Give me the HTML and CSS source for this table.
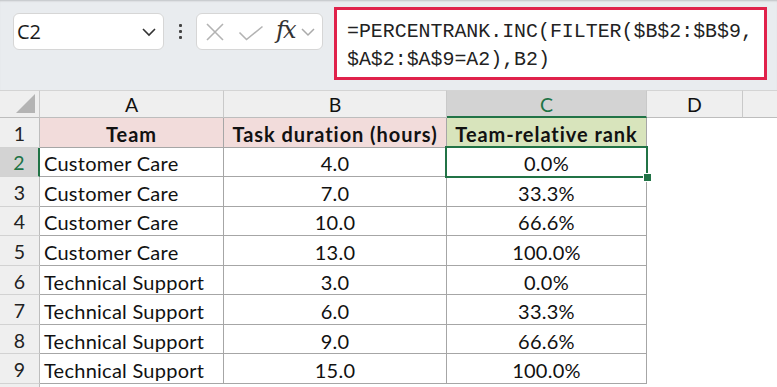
FILE: index.html
```html
<!DOCTYPE html>
<html>
<head>
<meta charset="utf-8">
<link rel="stylesheet" href="styles.css">
</head>
<body>
<div class="toolbar">
  <div class="namebox">
    <span class="nb-text">C2</span>
    <svg class="chev" width="16" height="10" viewBox="0 0 16 10"><path d="M2 2 L8 8 L14 2" fill="none" stroke="#333" stroke-width="1.6"/></svg>
  </div>
  <div class="dots"><i></i><i></i><i></i></div>
  <div class="fbtns">
    <svg class="ic-x" width="20" height="20" viewBox="0 0 20 20"><path d="M2 2 L18 18 M18 2 L2 18" stroke="#b3b3b3" stroke-width="1.6" fill="none"/></svg>
    <svg class="ic-ok" width="26" height="16" viewBox="0 0 26 16"><path d="M1.5 7.5 L8.5 14.5 L24.5 1.5" stroke="#b3b3b3" stroke-width="1.6" fill="none"/></svg>
    <span class="fx">fx</span>
    <svg class="chev2" width="16" height="10" viewBox="0 0 16 10"><path d="M2 2 L8 8 L14 2" fill="none" stroke="#aaa" stroke-width="1.5"/></svg>
  </div>
  <div class="fbar">
    <div class="ftext">=PERCENTRANK.INC(FILTER($B$2:$B$9,<br>$A$2:$A$9=A2),B2)</div>
  </div>
</div>
<div class="sheet">
  <div class="ch corner"><span class="tri"></span></div>
  <div class="ch">A</div>
  <div class="ch">B</div>
  <div class="ch chsel">C</div>
  <div class="ch">D</div>
  <div class="ch last"></div>

  <div class="rh">1</div>
  <div class="c hdr pink">Team</div>
  <div class="c hdr pink">Task duration (hours)</div>
  <div class="c hdr green">Team-relative rank</div>
  <div class="e"></div><div class="e"></div>

  <div class="rh rhsel">2</div>
  <div class="c l">Customer Care</div>
  <div class="c">4.0</div>
  <div class="c sel">0.0%<span class="selbox"><span class="handle"></span></span></div>
  <div class="e"></div><div class="e"></div>

  <div class="rh">3</div>
  <div class="c l">Customer Care</div>
  <div class="c">7.0</div>
  <div class="c">33.3%</div>
  <div class="e"></div><div class="e"></div>

  <div class="rh">4</div>
  <div class="c l">Customer Care</div>
  <div class="c">10.0</div>
  <div class="c">66.6%</div>
  <div class="e"></div><div class="e"></div>

  <div class="rh">5</div>
  <div class="c l">Customer Care</div>
  <div class="c">13.0</div>
  <div class="c">100.0%</div>
  <div class="e"></div><div class="e"></div>

  <div class="rh">6</div>
  <div class="c l">Technical Support</div>
  <div class="c">3.0</div>
  <div class="c">0.0%</div>
  <div class="e"></div><div class="e"></div>

  <div class="rh">7</div>
  <div class="c l">Technical Support</div>
  <div class="c">6.0</div>
  <div class="c">33.3%</div>
  <div class="e"></div><div class="e"></div>

  <div class="rh">8</div>
  <div class="c l">Technical Support</div>
  <div class="c">9.0</div>
  <div class="c">66.6%</div>
  <div class="e"></div><div class="e"></div>

  <div class="rh">9</div>
  <div class="c l">Technical Support</div>
  <div class="c">15.0</div>
  <div class="c">100.0%</div>
  <div class="e"></div><div class="e"></div>

  <div class="rh"></div>
  <div class="e"></div><div class="e"></div><div class="e"></div><div class="e"></div><div class="e"></div>
</div>
</body>
</html>
```
FILE: styles.css
```css
* { box-sizing: border-box; }
html, body { margin: 0; padding: 0; }
body {
  width: 777px;
  height: 387px;
  overflow: hidden;
  background: #fff;
  font-family: Lato, "Liberation Sans", sans-serif;
}
.toolbar {
  height: 90px;
  background: #e9ecef;
  display: flex;
  align-items: flex-start;
  padding-left: 13px;
  box-shadow: inset 0 2px 2px -1px rgba(0,0,0,0.18);
}
.namebox {
  margin-top: 13px;
  width: 151px;
  height: 37px;
  background: #fff;
  border: 1px solid #d6d6d6;
  border-radius: 6px;
  display: flex;
  align-items: center;
  padding: 0 6px 0 3px;
}
.nb-text {
  font-family: "Open Sans", "Liberation Sans", sans-serif;
  font-size: 20px;
  color: #1a1a1a;
  flex: 1;
}
.chev { margin-top: 1px; }
.dots {
  margin: 24px 0 0 0;
  width: 32px;
  display: flex;
  flex-direction: column;
  align-items: center;
  gap: 3px;
}
.dots i {
  display: block;
  width: 3px;
  height: 3px;
  background: #444;
  border-radius: 1px;
}
.fbtns {
  margin-top: 13px;
  width: 127px;
  height: 37px;
  background: #fff;
  border: 1px solid #d6d6d6;
  border-radius: 6px;
  display: flex;
  align-items: center;
  padding-left: 8px;
}
.ic-x { margin-right: 13px; }
.ic-ok { margin-right: 12px; margin-top: 2px; }
.fx {
  font-family: "DejaVu Serif", "Liberation Serif", serif;
  font-style: italic;
  font-size: 24px;
  color: #333;
  letter-spacing: -2px;
  margin-top: -4px;
}
.chev2 { margin-left: 6px; }
.fbar {
  margin-top: 7px;
  margin-left: 11px;
  width: 433px;
  height: 73px;
  background: #fff;
  border: 3px solid #e0224b;
  padding: 8px 0 0 10px;
}
.ftext {
  font-family: "Liberation Mono", monospace;
  font-size: 19.9px;
  line-height: 28px;
  color: #222;
  white-space: nowrap;
}
.sheet {
  display: grid;
  grid-template-columns: 40px 184px 223px 200px 96px 1fr;
  grid-template-rows: 28px repeat(9, 29.56px) 10px;
  font-size: 20px;
  color: #111;
}
.ch {
  background: #efefef;
  border-top: 1px solid #d4d4d4;
  border-right: 1px solid #c9c9c9;
  border-bottom: 1px solid #bdbdbd;
  display: flex;
  align-items: center;
  justify-content: center;
  font-size: 19.5px;
  color: #111;
  padding-top: 1px;
}
.ch.last { border-right: none; }
.ch.chsel {
  background: #d3d3d3;
  color: #217346;
  border-bottom: 2px solid #217346;
}
.corner { position: relative; }
.tri {
  position: absolute;
  right: 4px;
  bottom: 4px;
  width: 0;
  height: 0;
  border-left: 19px solid transparent;
  border-bottom: 19px solid #b4b4b4;
}
.rh {
  background: #efefef;
  border-right: 1px solid #bdbdbd;
  border-bottom: 1px solid #d2d2d2;
  display: flex;
  align-items: center;
  justify-content: center;
  color: #222;
  font-size: 19.5px;
  padding-top: 2px;
}
.rh.rhsel {
  background: #d3d3d3;
  color: #217346;
  border-right: 2px solid #217346;
}
.c {
  border-right: 1px solid #a6a6a6;
  border-bottom: 1px solid #a6a6a6;
  display: flex;
  align-items: center;
  justify-content: center;
  white-space: nowrap;
  position: relative;
  padding-top: 3px;
  letter-spacing: 0.25px;
}
.c.l { justify-content: flex-start; padding-left: 4px; }
.hdr { font-weight: 700; letter-spacing: 0.95px; }
.pink { background: #f2dcdb; }
.green { background: #d8e4bc; }
.e { background: #fff; }
.c.sel { z-index: 2; }
.selbox {
  position: absolute;
  left: -2px;
  top: -2px;
  right: -2px;
  bottom: -2px;
  border: 2px solid #217346;
}
.handle {
  position: absolute;
  right: -6px;
  bottom: -6px;
  width: 9px;
  height: 9px;
  background: #217346;
  border: 1px solid #fff;
}
```
